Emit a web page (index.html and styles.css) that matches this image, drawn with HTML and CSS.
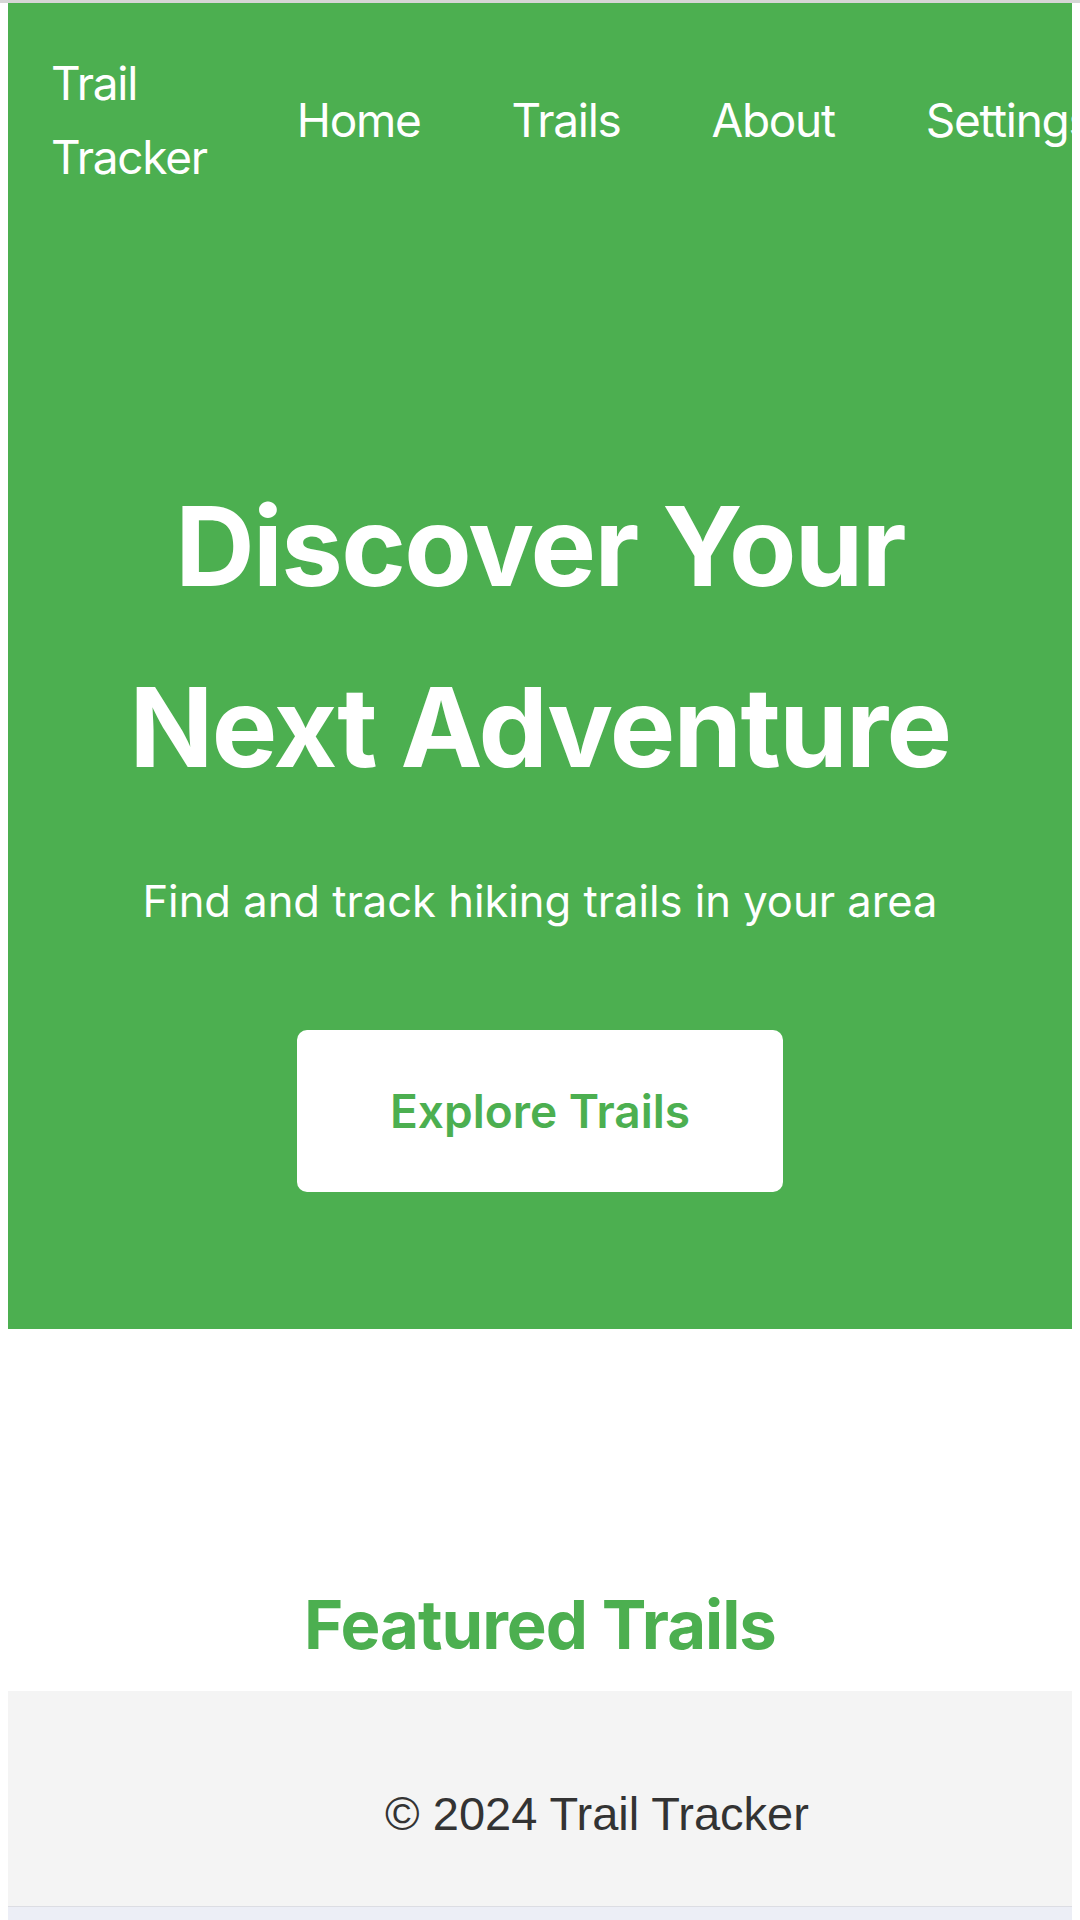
FILE: index.html
```html
<!DOCTYPE html>
<html lang="en">
<head>
<meta charset="utf-8">
<title>Trail Tracker</title>
<link rel="stylesheet" href="styles.css">
</head>
<body>
<section class="hero">
  <header class="nav">
    <div class="logo">Trail Tracker</div>
    <nav class="links">
      <a class="link" href="#">Home</a>
      <a class="link" href="#">Trails</a>
      <a class="link" href="#">About</a>
      <a class="link" href="#">Settings</a>
    </nav>
  </header>
  <div class="hero-body">
    <h1 class="hero-title">Discover Your Next Adventure</h1>
    <p class="hero-sub">Find and track hiking trails in your area</p>
    <a class="hero-btn" href="#">Explore Trails</a>
  </div>
</section>
<section class="featured">
  <h2 class="featured-title">Featured Trails</h2>
</section>
<footer class="footer">
  <p class="footer-text">© 2024 Trail Tracker</p>
</footer>
<div class="bottom-strip"></div>
</body>
</html>
```

FILE: styles.css
```css
html {
  border-top: 3px solid #d6d6d6;
  background: #ffffff;
}
body {
  margin: 0 8px;
  font-family: Inter, "Noto Sans", sans-serif;
  overflow: hidden;
}
.hero {
  background: #4caf50;
  color: #ffffff;
  height: 1326px;
  display: flex;
  flex-direction: column;
}
.nav {
  display: flex;
  align-items: center;
  gap: 90px;
  padding: 43px 0 0 43px;
}
.logo {
  font-size: 46px;
  line-height: 74px;
  letter-spacing: -1.3px;
}
.links {
  display: flex;
  gap: 91px;
  flex-shrink: 0;
}
.link {
  color: #ffffff;
  text-decoration: none;
  font-size: 46px;
  line-height: 74px;
  letter-spacing: -1.3px;
  white-space: nowrap;
}
.hero-body {
  display: flex;
  flex-direction: column;
  align-items: center;
  text-align: center;
  padding-top: 262px;
}
.hero-title {
  margin: 0;
  font-size: 110px;
  line-height: 181px;
  font-weight: 700;
  letter-spacing: -1.6px;
  max-width: 900px;
}
.hero-sub {
  margin: 55px 0 0;
  font-size: 43.5px;
  line-height: 57px;
}
.hero-btn {
  margin-top: 100px;
  background: #ffffff;
  color: #4caf50;
  text-decoration: none;
  font-size: 46px;
  font-weight: 600;
  line-height: 54px;
  padding: 54px 93px;
  border-radius: 10px;
}
.featured {
  padding-top: 255px;
  padding-bottom: 26px;
  text-align: center;
}
.featured-title {
  margin: 0;
  color: #4caf50;
  font-size: 67px;
  line-height: 81px;
  font-weight: 700;
  letter-spacing: -1px;
}
.footer {
  background: #f4f4f4;
  height: 215px;
  box-sizing: border-box;
  padding: 94px 0 0 114px;
  text-align: center;
}
.footer-text {
  margin: 0;
  color: #333333;
  font-family: "Liberation Sans", Arial, sans-serif;
  font-size: 47px;
  line-height: 58px;
}
.bottom-strip {
  height: 14px;
  border-top: 1px solid #dcdde3;
  background: #eceef6;
  margin: 0 -8px;
}
```
